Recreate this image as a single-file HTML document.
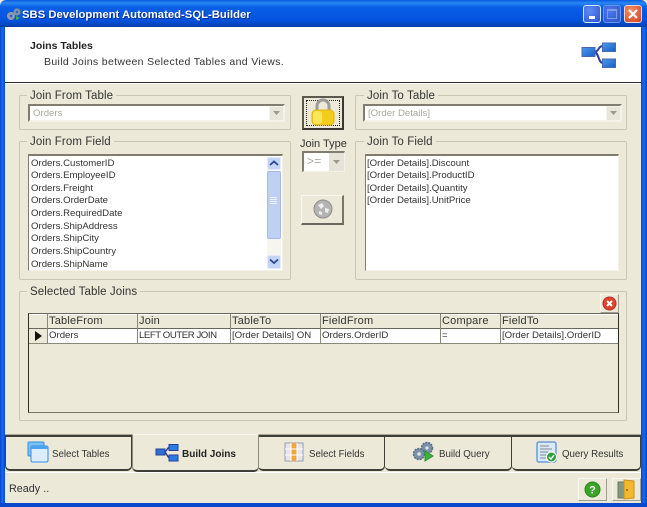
<!DOCTYPE html>
<html><head><meta charset="utf-8"><style>
html,body{margin:0;padding:0;background:#fff}
#w{position:relative;width:647px;height:507px;overflow:hidden;background:#ece9d8;font:10.5px/13px "Liberation Sans",sans-serif;color:#222}
#w div,#w span.a,#w svg{position:absolute;box-sizing:border-box}
.t{white-space:nowrap}
.gb{border:1px solid #c8c6b6;border-radius:2px}
.lg{background:#ece9d8;padding:0 3px;font-size:11.5px;color:#333;white-space:nowrap;letter-spacing:.1px;line-height:14px}
.in{border:2px solid;border-color:#807d70 #f4f2e8 #f4f2e8 #807d70;background:#fff}
.tab{top:435px;height:36px;border-top:2px solid #3f3f38;border-right:1px solid #3f3f38;border-bottom:2px solid #3f3f38;border-radius:0 0 5px 5px;background:#ece9d8}
.tl{top:448px;font-size:9.7px;white-space:nowrap;color:#333}
.c{font-size:9.65px;white-space:nowrap;color:#333}
.h{font-size:11px;letter-spacing:.2px;white-space:nowrap;color:#333}
.v{background:#8a8878;width:1px}
</style></head><body><div id="w">
<!-- title bar -->
<div style="left:0;top:0;width:647px;height:27px;background:linear-gradient(#0a5ae0 0,#2a86f2 3px,#0a5fe6 7px,#0453de 20px,#0346c0 25px,#023a9c 27px);border-radius:6px 6px 0 0"></div>
<div style="left:0;top:27px;width:5px;height:480px;background:linear-gradient(90deg,#0a44c4,#1a6af0 50%,#0846d8)"></div>
<div style="left:641px;top:27px;width:6px;height:480px;background:linear-gradient(90deg,#0846d8,#1a6af0 50%,#0a44c4)"></div>
<div style="left:0;top:503px;width:647px;height:4px;background:#0a48cc"></div>
<svg style="left:6px;top:7px" width="16" height="14" viewBox="0 0 16 14"><circle cx="5" cy="9" r="4" fill="#8e9cb0"/><circle cx="11" cy="5" r="3.6" fill="#7f93a0"/><circle cx="5" cy="9" r="1.4" fill="#2f62c8"/><circle cx="11" cy="5" r="1.2" fill="#2f62c8"/><path d="M10 9l4 2-4 2z" fill="#3fb43f"/></svg>
<div class="t" style="left:22px;top:8px;color:#fff;font-weight:bold;font-size:11.3px;line-height:14px;text-shadow:1px 1px 0 #0a2f90">SBS Development Automated-SQL-Builder</div>
<!-- window buttons -->
<div style="left:583px;top:5px;width:18px;height:18px;border:1px solid #d8e4f8;border-radius:3px;background:radial-gradient(circle at 35% 30%,#5f8cf0,#2a55d8)"></div>
<div style="left:589px;top:16px;width:6px;height:3px;background:#fff"></div>
<div style="left:603px;top:5px;width:18px;height:18px;border:1px solid #6f93e6;border-radius:3px;background:radial-gradient(circle at 35% 30%,#4a7aea,#2a55d0)"></div>
<div style="left:607px;top:9px;width:10px;height:10px;border:1px solid #7f9ce6;border-top:2px solid #7f9ce6"></div>
<div style="left:624px;top:5px;width:18px;height:18px;border:1px solid #f0d8d0;border-radius:3px;background:radial-gradient(circle at 35% 30%,#f0916a,#d2401c)"></div>
<svg style="left:624px;top:5px" width="18" height="18"><path d="M5 5l8 8M13 5l-8 8" stroke="#fff" stroke-width="2.2"/></svg>
<!-- header -->
<div style="left:5px;top:27px;width:636px;height:55px;background:#fff"></div>
<div style="left:5px;top:82px;width:636px;height:1px;background:#2c2c28"></div>
<div style="left:5px;top:83px;width:636px;height:1px;background:#fff"></div>
<div class="t" style="left:30px;top:40px;font-weight:bold;font-size:10.5px;color:#222">Joins Tables</div>
<div class="t" style="left:44px;top:56px;font-size:10.5px;letter-spacing:.34px;color:#333">Build Joins between Selected Tables and Views.</div>
<svg style="left:580px;top:41px" width="38" height="28" viewBox="0 0 38 28"><defs><linearGradient id="g" x1="0" y1="0" x2="1" y2="1"><stop offset="0" stop-color="#4a9cec"/><stop offset="1" stop-color="#1a5cc8"/></linearGradient></defs><path d="M14 11c5 0 4-6 9-6M14 11c5 0 4 11 9 11" fill="none" stroke="#2c3f98" stroke-width="2"/><rect x="2" y="6.500" width="13" height="9" fill="url(#g)" stroke="#4a66b8"/><rect x="22.500" y="2" width="13" height="8.500" fill="url(#g)" stroke="#4a66b8"/><rect x="22.500" y="18" width="13" height="8.500" fill="url(#g)" stroke="#4a66b8"/></svg>
<!-- Join From Table -->
<div class="gb" style="left:19px;top:95px;width:272px;height:35px"></div>
<div class="lg" style="left:27px;top:89px">Join From Table</div>
<div class="in" style="left:28px;top:104px;width:257px;height:18px"></div>
<div class="t" style="left:33px;top:107px;color:#a8a8a0;font-size:9.65px">Orders</div>
<div style="left:269px;top:106px;width:15px;height:15px;background:#e8e6da;border:1px solid #f4f2ea"></div>
<svg style="left:272px;top:111px" width="9" height="5"><path d="M1 0h7l-3.500 4z" fill="#9a9a90"/></svg>
<!-- Join To Table -->
<div class="gb" style="left:355px;top:95px;width:272px;height:35px"></div>
<div class="lg" style="left:364px;top:89px">Join To Table</div>
<div class="in" style="left:363px;top:104px;width:259px;height:18px"></div>
<div class="t" style="left:368px;top:107px;color:#a8a8a0;font-size:9.65px">[Order Details]</div>
<div style="left:606px;top:106px;width:15px;height:15px;background:#e8e6da;border:1px solid #f4f2ea"></div>
<svg style="left:609px;top:111px" width="9" height="5"><path d="M1 0h7l-3.500 4z" fill="#9a9a90"/></svg>
<!-- Lock -->
<div style="left:302px;top:96px;width:42px;height:34px;border:2px solid;border-color:#5c5a50 #3a3830 #3a3830 #5c5a50;background:#ece9d8"></div>
<div style="left:306px;top:100px;width:34px;height:26px;border:1px dotted #222"></div>
<svg style="left:310px;top:98px" width="26" height="30" viewBox="0 0 26 30"><path d="M7 14V8a6 6 0 0 1 12 0v6" fill="none" stroke="#9c9c98" stroke-width="3"/><rect x="2" y="12" width="22" height="15" rx="4" fill="#f4cc1a" stroke="#e0b414"/><rect x="3" y="13" width="9" height="13" rx="3" fill="#fbe658"/></svg>
<!-- Join From Field -->
<div class="gb" style="left:19px;top:141px;width:272px;height:139px"></div>
<div class="lg" style="left:27px;top:135px">Join From Field</div>
<div class="in" style="left:28px;top:154px;width:255px;height:117px;border-width:2px 1px 1px 1px"></div>
<div class="c" style="left:31px;top:157px">Orders.CustomerID</div>
<div class="c" style="left:31px;top:169px">Orders.EmployeeID</div>
<div class="c" style="left:31px;top:182px">Orders.Freight</div>
<div class="c" style="left:31px;top:194px">Orders.OrderDate</div>
<div class="c" style="left:31px;top:207px">Orders.RequiredDate</div>
<div class="c" style="left:31px;top:220px">Orders.ShipAddress</div>
<div class="c" style="left:31px;top:232px">Orders.ShipCity</div>
<div class="c" style="left:31px;top:245px">Orders.ShipCountry</div>
<div class="c" style="left:31px;top:258px">Orders.ShipName</div>
<!-- scrollbar -->
<div style="left:267px;top:157px;width:14px;height:112px;background:#f6f5ee"></div>
<div style="left:267px;top:157px;width:14px;height:13px;background:#c4d4f6;border:1px solid #e4ecfa;border-radius:2px"></div>
<svg style="left:269px;top:160px" width="10" height="7"><path d="M1 5l4-3.500 4 3.500" fill="none" stroke="#2a4a90" stroke-width="1.8"/></svg>
<div style="left:267px;top:171px;width:14px;height:68px;background:#c0d0f4;border:1px solid #a4bcec;border-radius:2px"></div>
<div style="left:270px;top:197px;width:7px;height:1px;background:#eef3fc;box-shadow:0 2px 0 #eef3fc,0 4px 0 #eef3fc,0 6px 0 #eef3fc"></div>
<div style="left:267px;top:255px;width:14px;height:14px;background:#c4d4f6;border:1px solid #e4ecfa;border-radius:2px"></div>
<svg style="left:269px;top:258px" width="10" height="7"><path d="M1 1.500l4 3.500 4-3.500" fill="none" stroke="#2a4a90" stroke-width="1.8"/></svg>
<!-- Join type -->
<div class="t" style="left:300px;top:137px;font-size:11px;line-height:14px;color:#333">Join Type</div>
<div class="in" style="left:302px;top:151px;width:43px;height:21px;border-width:2px 1px 1px 2px"></div>
<div class="t" style="left:307px;top:155px;color:#a8a8a0;font-size:12px;letter-spacing:.3px">&gt;=</div>
<div style="left:329px;top:153px;width:15px;height:18px;background:#e6e4d8"></div>
<svg style="left:332px;top:160px" width="9" height="5"><path d="M1 0h7l-3.500 4z" fill="#9a9a90"/></svg>
<!-- gray button -->
<div style="left:301px;top:195px;width:43px;height:30px;border:1px solid;border-color:#f8f7f0 #77756a #6a685e #f8f7f0;border-bottom-width:2px;border-right-width:2px;background:#ece9d8"></div>
<svg style="left:313px;top:199px" width="20" height="20" viewBox="0 0 20 20"><circle cx="10" cy="10" r="9" fill="#b4b4b4"/><circle cx="10" cy="10" r="9" fill="none" stroke="#8e8e8e"/><path d="M5 6l4-2 2 3-3 3zM12 9l4 1-1 4-3-1zM6 12l3 1 0 3-3-1z" fill="#eeeeee"/></svg>
<!-- Join To Field -->
<div class="gb" style="left:355px;top:141px;width:272px;height:139px"></div>
<div class="lg" style="left:364px;top:135px">Join To Field</div>
<div class="in" style="left:365px;top:154px;width:254px;height:117px;border-width:2px 1px 1px 1px"></div>
<div class="c" style="left:367px;top:157px">[Order Details].Discount</div>
<div class="c" style="left:367px;top:169px">[Order Details].ProductID</div>
<div class="c" style="left:367px;top:182px">[Order Details].Quantity</div>
<div class="c" style="left:367px;top:194px">[Order Details].UnitPrice</div>
<!-- Selected Joins -->
<div class="gb" style="left:19px;top:291px;width:608px;height:130px"></div>
<div class="lg" style="left:27px;top:285px">Selected Table Joins</div>
<div style="left:600px;top:294px;width:19px;height:19px;background:#ece9d8;border:1px solid;border-color:#f8f7f0 #a09e90 #a09e90 #f8f7f0"></div>
<svg style="left:602px;top:296px" width="15" height="15" viewBox="0 0 15 15"><circle cx="7.500" cy="7.500" r="6.500" fill="#e0402c" stroke="#b83020"/><path d="M5 5l5 5M10 5l-5 5" stroke="#fff" stroke-width="2"/></svg>
<!-- grid -->
<div style="left:28px;top:313px;width:591px;height:100px;border:1px solid;border-color:#6a685e #2e2e28 #77756a #2e2e28;background:#ece9d8"></div>
<div style="left:29px;top:314px;width:589px;height:1px;background:#fff"></div>
<div style="left:29px;top:328px;width:589px;height:1px;background:#6a685e"></div>
<div style="left:47px;top:329px;width:571px;height:14px;background:#fff"></div>
<div style="left:29px;top:343px;width:589px;height:1px;background:#8a8878"></div>
<div class="v" style="left:47px;top:314px;height:30px"></div>
<div class="v" style="left:137px;top:314px;height:30px"></div>
<div class="v" style="left:230px;top:314px;height:30px"></div>
<div class="v" style="left:320px;top:314px;height:30px"></div>
<div class="v" style="left:440px;top:314px;height:30px"></div>
<div class="v" style="left:500px;top:314px;height:30px"></div>
<div class="h" style="left:49px;top:315px">TableFrom</div>
<div class="h" style="left:139px;top:315px">Join</div>
<div class="h" style="left:232px;top:315px">TableTo</div>
<div class="h" style="left:322px;top:315px">FieldFrom</div>
<div class="h" style="left:442px;top:315px">Compare</div>
<div class="h" style="left:502px;top:315px">FieldTo</div>
<div class="c" style="left:49px;top:329px">Orders</div>
<div class="c" style="left:139px;top:329px;letter-spacing:-.45px">LEFT OUTER JOIN</div>
<div class="c" style="left:232px;top:329px">[Order Details] ON</div>
<div class="c" style="left:322px;top:329px">Orders.OrderID</div>
<div class="c" style="left:442px;top:329px">=</div>
<div class="c" style="left:502px;top:329px">[Order Details].OrderID</div>
<svg style="left:34px;top:330px" width="9" height="12"><path d="M1 1l7 5-7 5z" fill="#111"/></svg>
<!-- tabs -->
<div style="left:5px;top:434px;width:636px;height:1px;background:#a8a698"></div>
<div class="tab" style="left:5px;width:127px;border-left:1px solid #3f3f38"></div>
<div class="tab" style="left:258px;width:127px"></div>
<div class="tab" style="left:385px;width:127px"></div>
<div class="tab" style="left:512px;width:129px"></div>
<div style="left:132px;top:434px;width:127px;height:38px;background:#ece9d8;border-bottom:2px solid #3f3f38;border-top:1px solid #f8f7f0;border-left:1px solid #8c8a7e;border-right:1px solid #8c8a7e;border-radius:0 0 5px 5px"></div>
<div style="left:5px;top:472px;width:636px;height:1px;background:#fff"></div>
<!-- tab icons -->
<svg style="left:27px;top:441px" width="22" height="22" viewBox="0 0 22 22"><rect x="1" y="1" width="16" height="14" rx="1" fill="#7cc0f4" stroke="#2f90e8"/><rect x="4" y="5" width="17" height="16" rx="1.500" fill="#dcecfa" stroke="#2f90e8"/><rect x="4" y="5" width="17" height="3" fill="#4aa4ee"/></svg>
<div class="tl" style="left:52px">Select Tables</div>
<svg style="left:155px;top:444px" width="24" height="18" viewBox="0 0 24 18"><path d="M9 8c3 0 3-5 6-5M9 8c3 0 3 6 6 6" fill="none" stroke="#2c3f98" stroke-width="1.400"/><rect x="1" y="5" width="9" height="6" fill="#2a70d8" stroke="#2c3f98"/><rect x="14" y="0.500" width="9" height="6" fill="#2a7ce0" stroke="#2c3f98"/><rect x="14" y="11" width="9" height="6" fill="#2a7ce0" stroke="#2c3f98"/></svg>
<div class="tl" style="left:182px;font-weight:bold;color:#222;font-size:10px">Build Joins</div>
<svg style="left:284px;top:442px" width="20" height="20" viewBox="0 0 20 20"><rect x="1" y="1" width="18" height="18" fill="#e4e6ee" stroke="#9a9cae"/><rect x="7" y="1" width="6" height="18" fill="#f2a63c"/><path d="M7 1v18M13 1v18M1 7h18M1 13h18" stroke="#fff" stroke-width="1"/></svg>
<div class="tl" style="left:309px">Select Fields</div>
<svg style="left:412px;top:441px" width="24" height="22" viewBox="0 0 24 22"><circle cx="15" cy="7" r="5.500" fill="#7c90a6" stroke="#56708c" stroke-width="1.500" stroke-dasharray="2 1"/><circle cx="7" cy="13" r="5.500" fill="#7c90a6" stroke="#56708c" stroke-width="1.500" stroke-dasharray="2 1"/><circle cx="7" cy="13" r="1.800" fill="#dde6ee"/><circle cx="15" cy="7" r="1.600" fill="#dde6ee"/><path d="M13 10l8 5-8 5z" fill="#3cb43c" stroke="#2e8e2e"/></svg>
<div class="tl" style="left:439px">Build Query</div>
<svg style="left:536px;top:441px" width="22" height="22" viewBox="0 0 22 22"><rect x="1" y="1" width="19" height="20" rx="2" fill="#dce8f6" stroke="#6a9ae0" stroke-width="1.500"/><path d="M4 5h9M4 8h12M4 11h8M4 14h7M4 17h8" stroke="#7a8ca0"/><circle cx="15.500" cy="16" r="5" fill="#2ea03c" stroke="#fff"/><path d="M13 16l2 2 3-4" fill="none" stroke="#fff" stroke-width="1.400"/></svg>
<div class="tl" style="left:562px">Query Results</div>
<!-- status -->
<div class="t" style="left:9px;top:483px;font-size:10.8px;color:#333">Ready ..</div>
<div style="left:578px;top:478px;width:29px;height:23px;background:#ece9d8;border:1px solid;border-color:#f8f7f0 #a09e90 #a09e90 #f8f7f0"></div>
<svg style="left:584px;top:481px" width="17" height="17" viewBox="0 0 17 17"><circle cx="8.500" cy="8.500" r="7.500" fill="#3aa428" stroke="#2a8420"/><text x="8.500" y="12.500" text-anchor="middle" font-family="Liberation Sans" font-weight="bold" font-size="11" fill="#fff">?</text></svg>
<div style="left:612px;top:478px;width:29px;height:23px;background:#ece9d8;border:1px solid;border-color:#f8f7f0 #a09e90 #a09e90 #f8f7f0"></div>
<svg style="left:617px;top:479px" width="20" height="21" viewBox="0 0 20 21"><rect x="1" y="3" width="14" height="16" fill="#7e9a84" stroke="#68786c"/><path d="M7 1l10 1v17l-10 1z" fill="#f2b82e" stroke="#c89218"/><circle cx="10" cy="11" r="1" fill="#8a6210"/></svg>
</div></body></html>
